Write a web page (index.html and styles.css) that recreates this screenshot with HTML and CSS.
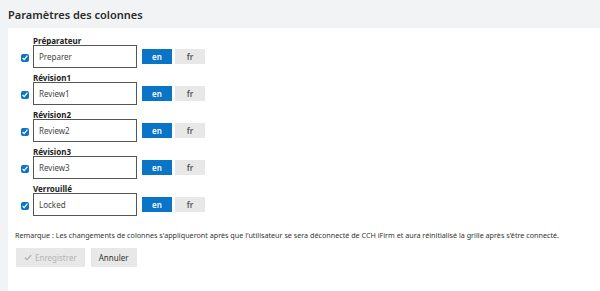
FILE: index.html
```html
<!DOCTYPE html>
<html lang="fr">
<head>
  <meta charset="UTF-8">
  <title>Paramètres des colonnes</title>
  <link rel="stylesheet" href="styles.css">
</head>
<body>
  <header class="titre">
    <h1>Paramètres des colonnes</h1>
  </header>
  <main class="panneau">
    <div class="colonne">
      <label class="nom" for="c1">Préparateur</label>
      <div class="ligne">
        <input type="checkbox" class="coche" checked>
        <input type="text" id="c1" class="champ" value="Preparer">
        <button class="langue actif">en</button>
        <button class="langue">fr</button>
      </div>
    </div>
    <div class="colonne">
      <label class="nom" for="c2">Révision1</label>
      <div class="ligne">
        <input type="checkbox" class="coche" checked>
        <input type="text" id="c2" class="champ" value="Review1">
        <button class="langue actif">en</button>
        <button class="langue">fr</button>
      </div>
    </div>
    <div class="colonne">
      <label class="nom" for="c3">Révision2</label>
      <div class="ligne">
        <input type="checkbox" class="coche" checked>
        <input type="text" id="c3" class="champ" value="Review2">
        <button class="langue actif">en</button>
        <button class="langue">fr</button>
      </div>
    </div>
    <div class="colonne">
      <label class="nom" for="c4">Révision3</label>
      <div class="ligne">
        <input type="checkbox" class="coche" checked>
        <input type="text" id="c4" class="champ" value="Review3">
        <button class="langue actif">en</button>
        <button class="langue">fr</button>
      </div>
    </div>
    <div class="colonne">
      <label class="nom" for="c5">Verrouillé</label>
      <div class="ligne">
        <input type="checkbox" class="coche" checked>
        <input type="text" id="c5" class="champ" value="Locked">
        <button class="langue actif">en</button>
        <button class="langue">fr</button>
      </div>
    </div>

    <p class="remarque">Remarque : Les changements de colonnes s'appliqueront après que l'utilisateur se sera déconnecté de CCH iFirm et aura réinitialisé la grille après s'être connecté.</p>

    <div class="actions">
      <button class="bouton" disabled>
        <svg width="8" height="7" viewBox="0 0 8 7"><path d="M0.8 3.6 L3 5.8 L7.2 1" fill="none" stroke="currentColor" stroke-width="1.4"/></svg>
        Enregistrer
      </button>
      <button class="bouton">Annuler</button>
    </div>
  </main>
</body>
</html>
```

FILE: styles.css
```css
body {
  font-family: 'Noto Sans', 'Open Sans', sans-serif;
  margin: 0;
  padding: 0;
  background: #f2f3f5;
  color: #333;
}
.titre {
  height: 28px;
  padding: 0 8px;
}
.titre h1 {
  margin: 0;
  font-size: 11px;
  font-weight: 600;
  line-height: 30px;
  color: #2b2b2b;
}
.panneau {
  background: #fff;
  margin-left: 8px;
  padding: 8px 0 24px 0;
  min-height: 230px;
}
.colonne {
  margin-bottom: 5px;
  padding-left: 25px;
}
.nom {
  display: block;
  font-size: 8px;
  font-weight: 700;
  line-height: 9px;
  color: #222;
}
.ligne {
  display: flex;
  align-items: center;
  position: relative;
}
.coche {
  position: absolute;
  left: -12px;
  top: 9px;
  margin: 0;
  width: 8px;
  height: 8px;
  accent-color: #0a74c6;
}
.champ {
  width: 104px;
  height: 23px;
  box-sizing: border-box;
  border: 1px solid #555;
  padding: 0 5px;
  font-family: inherit;
  font-size: 8px;
  color: #444;
  margin: 0 5px 0 0;
}
.langue {
  width: 30px;
  height: 15px;
  border: none;
  padding: 0;
  margin-right: 3px;
  font-family: inherit;
  font-size: 8px;
  font-weight: 600;
  background: #e8e8e8;
  color: #555;
}
.langue.actif {
  background: #0a74c6;
  color: #fff;
}
.remarque {
  margin: 14px 0 0 7px;
  font-size: 7.2px;
  color: #333;
}
.actions {
  display: flex;
  gap: 6px;
  margin: 8px 0 0 8px;
}
.bouton {
  height: 19px;
  border: none;
  padding: 0 8px;
  background: #e8e8e8;
  font-family: inherit;
  font-size: 8px;
  color: #333;
  display: flex;
  align-items: center;
  gap: 3px;
}
.bouton:disabled {
  color: #b5b5b5;
}
```
